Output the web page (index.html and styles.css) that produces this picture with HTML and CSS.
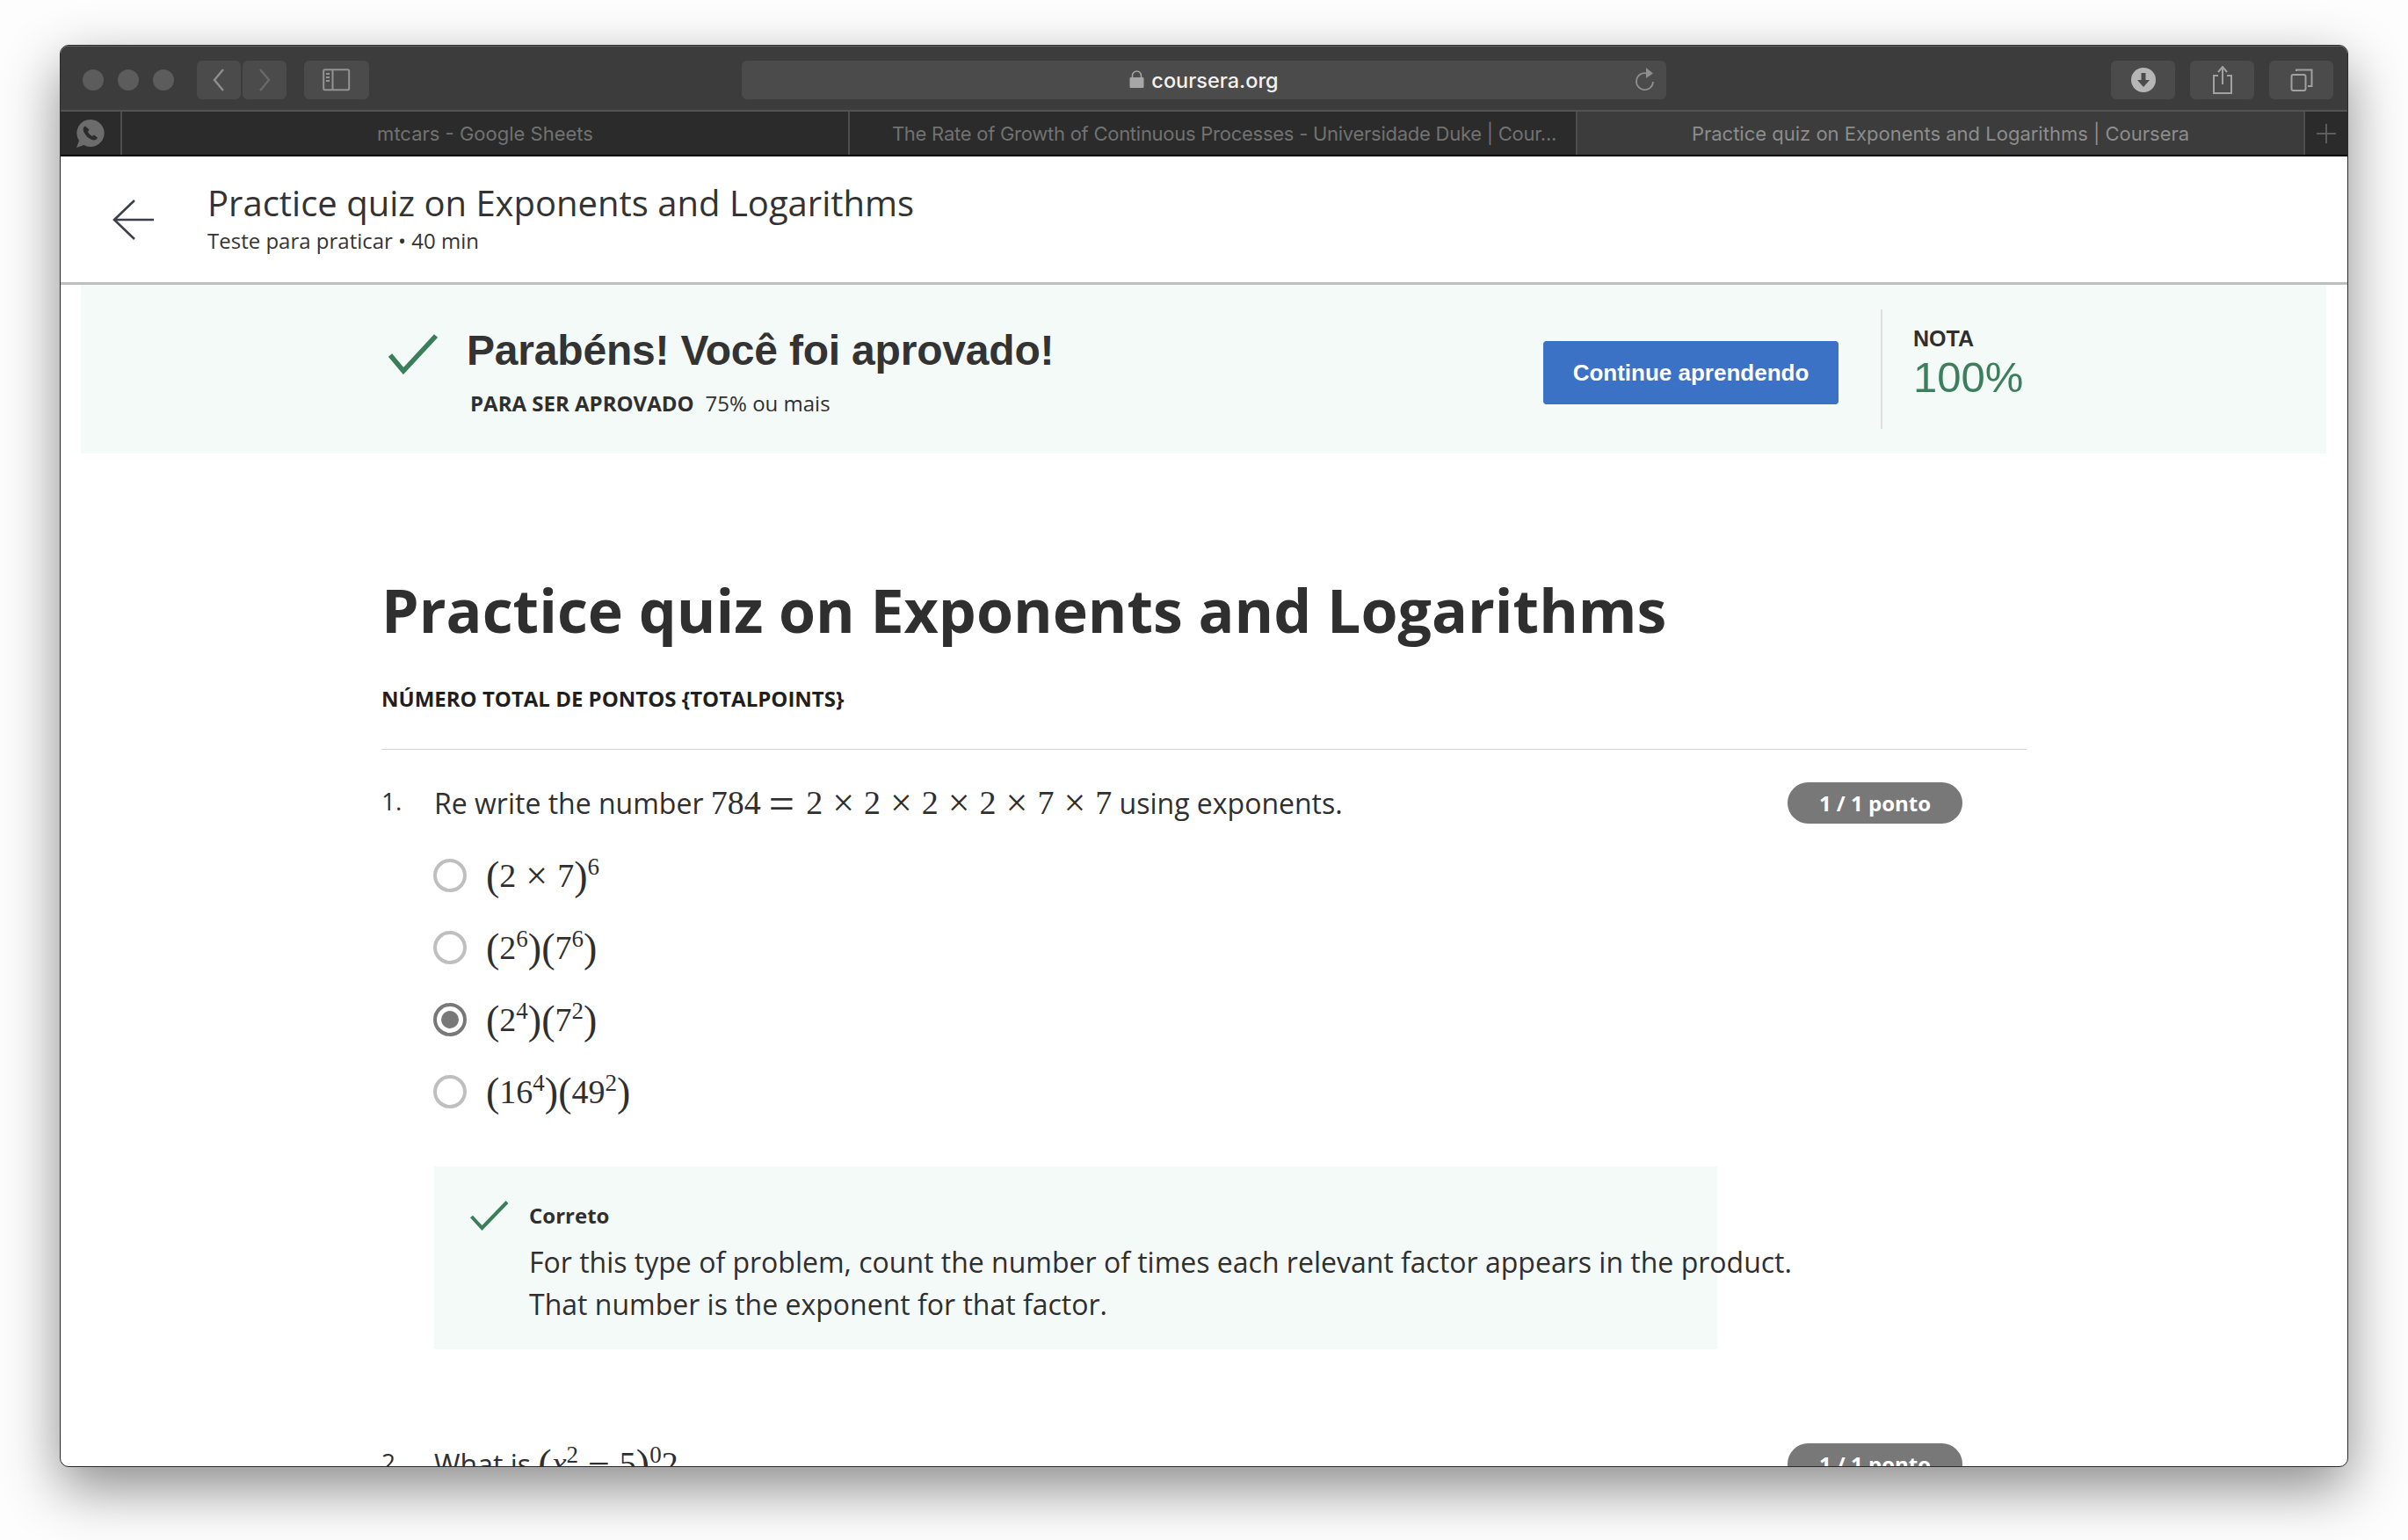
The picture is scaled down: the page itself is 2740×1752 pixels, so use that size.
FILE: index.html
```html
<!DOCTYPE html>
<html lang="en">

<head>
    <meta charset="UTF-8">
    <title>Practice quiz on Exponents and Logarithms | Coursera</title>
    <link rel="stylesheet" href="styles.css">
</head>

<body>
    <div class="window">
        <div class="toolbar">
            <div class="lights"><span></span><span></span><span></span></div>
            <div class="nav-buttons">
                <div class="tool-btn nav-btn">
                    <svg width="16" height="28" viewBox="0 0 16 28"><path d="M13 2 3 14l10 12" fill="none" stroke="#8e8f8e" stroke-width="2.4"/></svg>
                </div>
                <div class="tool-btn nav-btn">
                    <svg width="16" height="28" viewBox="0 0 16 28"><path d="M3 2l10 12L3 26" fill="none" stroke="#686968" stroke-width="2.4"/></svg>
                </div>
            </div>
            <div class="tool-btn sidebar-btn">
                <svg width="32" height="26" viewBox="0 0 32 26"><rect x="1.2" y="1.2" width="29" height="23" rx="1.5" fill="none" stroke="#929392" stroke-width="2"/><path d="M11.5 1v24" stroke="#929392" stroke-width="2"/><path d="M4 6h4M4 10h4M4 14h4" stroke="#929392" stroke-width="2"/></svg>
            </div>
            <div class="address">
                <svg class="lock" width="17" height="20" viewBox="0 0 17 20"><path d="M3.5 9V6a5 5 0 0 1 10 0v3" fill="none" stroke="#a5a6a5" stroke-width="1.6"/><rect x="0.5" y="8" width="16" height="12" rx="1" fill="#a5a6a5"/></svg>
                <span class="host">coursera.org</span>
                <svg class="reload" width="24" height="28" viewBox="0 0 24 28"><path d="M14 6.5A9.5 9.5 0 1 0 21 16" fill="none" stroke="#8d8e8d" stroke-width="1.8"/><path d="M13 0l8 6.5-8 5.5z" fill="#8d8e8d"/></svg>
            </div>
            <div class="right-buttons">
                <div class="tool-btn right-btn">
                    <svg width="28" height="28" viewBox="0 0 28 28"><circle cx="14" cy="14" r="14" fill="#b5b6b5"/><path d="M11.5 6h5v8h4.500L14 22l-7-8h4.500z" fill="#4b4c4b"/></svg>
                </div>
                <div class="tool-btn right-btn">
                    <svg width="24" height="32" viewBox="0 0 24 32"><path d="M7 11H2v20h20V11h-5" fill="none" stroke="#a0a1a0" stroke-width="2"/><path d="M12 21V2M7 7l5-6 5 6" fill="none" stroke="#a0a1a0" stroke-width="2"/></svg>
                </div>
                <div class="tool-btn right-btn">
                    <svg width="26" height="26" viewBox="0 0 26 26"><rect x="1.500" y="7" width="16" height="18" rx="2" fill="none" stroke="#a0a1a0" stroke-width="2"/><path d="M7 3V1.500h17.500V20H20" fill="none" stroke="#a0a1a0" stroke-width="2"/></svg>
                </div>
            </div>
        </div>

        <div class="tabbar">
            <div class="pinned">
                <svg width="34" height="34" viewBox="0 0 34 34"><path d="M17 1a15.500 15.500 0 0 0-13 24L1 33l8.500-3A15.500 15.500 0 1 0 17 1z" fill="#6b6c6b"/><path d="M11 8.500c-2.500 1-3 4-1.500 7 2 4 5 7 9 8.500 3 1 5.500 0 6.500-2.500l-4-3-2 1.500c-2-1-4-3-5-5l1.500-2.500z" fill="#2b2c2b"/></svg>
            </div>
            <div class="tab">mtcars - Google Sheets</div>
            <div class="tab tab-long">The Rate of Growth of Continuous Processes - Universidade Duke | Cour...</div>
            <div class="tab tab-active">Practice quiz on Exponents and Logarithms | Coursera</div>
            <div class="tab-add">
                <svg width="24" height="24" viewBox="0 0 24 24"><path d="M12 1v22M1 12h22" stroke="#5c5d5c" stroke-width="2"/></svg>
            </div>
        </div>

        <div class="page">
            <div class="page-header">
                <svg class="back" width="50" height="48" viewBox="0 0 50 48"><path d="M27 2 4 24l23 22M4 24h45" fill="none" stroke="#3a3f49" stroke-width="2.600"/></svg>
                <div class="page-heading">
                    <div class="page-title">Practice quiz on Exponents and Logarithms</div>
                    <div class="page-sub">Teste para praticar • 40 min</div>
                </div>
            </div>

            <div class="banner">
                <svg class="banner-check" width="56" height="46" viewBox="0 0 56 46"><path d="M2 24l15 18L54 2" fill="none" stroke="#3a7e5a" stroke-width="5.500"/></svg>
                <div class="banner-text">
                    <div class="banner-title">Parabéns! Você foi aprovado!</div>
                    <div class="banner-sub"><b>PARA SER APROVADO</b><span>75% ou mais</span></div>
                </div>
                <div class="continue-btn">Continue aprendendo</div>
                <div class="grade">
                    <div class="grade-label">NOTA</div>
                    <div class="grade-value">100%</div>
                </div>
            </div>

            <div class="quiz">
                <h1>Practice quiz on Exponents and Logarithms</h1>
                <div class="total">NÚMERO TOTAL DE PONTOS {TOTALPOINTS}</div>

                <div class="question">
                    <div class="q-num">1.</div>
                    <div class="q-text">Re write the number <span class="math">784<i class="rel">=</i>2<i class="op">×</i>2<i class="op">×</i>2<i class="op">×</i>2<i class="op">×</i>7<i class="op">×</i>7</span> using exponents.</div>
                    <div class="points">1 / 1 ponto</div>
                </div>

                <div class="options">
                    <div class="option"><span class="radio"></span><span class="math"><i class="paren">(</i>2<i class="op">×</i>7<i class="paren">)</i><sup>6</sup></span></div>
                    <div class="option"><span class="radio"></span><span class="math"><i class="paren">(</i>2<sup>6</sup><i class="paren">)</i><i class="paren">(</i>7<sup>6</sup><i class="paren">)</i></span></div>
                    <div class="option"><span class="radio radio-on"></span><span class="math"><i class="paren">(</i>2<sup>4</sup><i class="paren">)</i><i class="paren">(</i>7<sup>2</sup><i class="paren">)</i></span></div>
                    <div class="option"><span class="radio"></span><span class="math"><i class="paren">(</i>16<sup>4</sup><i class="paren">)</i><i class="paren">(</i>49<sup>2</sup><i class="paren">)</i></span></div>
                </div>

                <div class="feedback">
                    <svg class="feedback-check" width="44" height="34" viewBox="0 0 44 34"><path d="M1.500 18l12 13L42 1.500" fill="none" stroke="#3a7e5a" stroke-width="4"/></svg>
                    <div class="feedback-body">
                        <div class="feedback-label">Correto</div>
                        <p class="feedback-first">For this type of problem, count the number of times each relevant factor appears in the product.</p>
                        <p>That number is the exponent for that factor.</p>
                    </div>
                </div>

                <div class="question question-next">
                    <div class="q-num">2.</div>
                    <div class="q-text">What is <span class="math"><i class="paren">(</i><em>x</em><sup>2</sup><i class="op">−</i>5<i class="paren">)</i><sup>0</sup>2</span></div>
                    <div class="points">1 / 1 ponto</div>
                </div>
            </div>
        </div>
    </div>
</body>

</html>
```

FILE: styles.css
```css
html,
body {
    height: 100%;
}

body {
    box-sizing: border-box;
    margin: 0;
    padding: 51px 0 0 68px;
    background-color: #fdfdfd;
    font-family: "Open Sans", sans-serif;
    color: #2f2f2f;
}

.window {
    box-sizing: border-box;
    width: 2604px;
    height: 1618px;
    display: flex;
    flex-direction: column;
    overflow: hidden;
    border: 1px solid #2a2a2a;
    border-radius: 10px;
    background-color: #fff;
    box-shadow: 0 24px 64px rgba(0, 0, 0, 0.45);
}

/* toolbar */
.toolbar {
    box-sizing: border-box;
    height: 75px;
    flex: none;
    display: flex;
    align-items: flex-start;
    padding-top: 16px;
    background-color: #3b3c3b;
    border-top: 1px solid #636463;
    border-bottom: 2px solid #525352;
}

.lights {
    display: flex;
    gap: 16px;
    margin: 10px 0 0 25px;
}

.lights span {
    width: 24px;
    height: 24px;
    border-radius: 50%;
    background-color: #5b5c5b;
}

.tool-btn {
    height: 44px;
    display: flex;
    align-items: center;
    justify-content: center;
    background-color: #4a4b4a;
    border-radius: 6px;
}

.nav-buttons {
    display: flex;
    gap: 2px;
    margin-left: 26px;
}

.nav-btn {
    width: 50px;
}

.sidebar-btn {
    width: 74px;
    margin-left: 20px;
}

.address {
    box-sizing: border-box;
    width: 1052px;
    height: 44px;
    margin-left: 424px;
    display: flex;
    align-items: center;
    justify-content: center;
    gap: 8px;
    position: relative;
    background-color: #4a4b4a;
    border-radius: 6px;
}

.host {
    font-family: "Inter", sans-serif;
    font-size: 23.500px;
    font-weight: 500;
    color: #f2f2f2;
}

.lock {
    margin-bottom: 2px;
}

.reload {
    position: absolute;
    right: 12px;
    top: 8px;
}

.right-buttons {
    display: flex;
    gap: 17px;
    margin-left: 506px;
}

.right-btn {
    width: 73px;
}

/* tabs */
.tabbar {
    height: 49px;
    flex: none;
    display: flex;
    background-color: #2a2b2a;
    border-bottom: 2px solid #000;
    font-family: "Inter", sans-serif;
    font-size: 22px;
    color: #717271;
}

.pinned {
    width: 70px;
    display: flex;
    align-items: center;
    justify-content: center;
    border-right: 2px solid #4d4e4d;
    box-sizing: border-box;
}

.tab {
    box-sizing: border-box;
    width: 828px;
    display: flex;
    align-items: center;
    justify-content: center;
    border-right: 2px solid #4d4e4d;
    white-space: nowrap;
}

.tab-long {
    padding-left: 26px;
    letter-spacing: -0.26px;
}

.tab-active {
    background-color: #3b3c3b;
    color: #8c8d8c;
}

.tab-add {
    flex: 1;
    display: flex;
    align-items: center;
    justify-content: center;
}

/* coursera page */
.page {
    flex: 1;
    min-height: 0;
    overflow: hidden;
}

.page-header {
    box-sizing: border-box;
    height: 146px;
    display: flex;
    align-items: center;
    padding-left: 57px;
    border-bottom: 3px solid #bcbfbe;
}

.back {
    margin-right: 60px;
}

.page-heading {
    margin-bottom: 3px;
}

.page-title {
    font-size: 40px;
    line-height: 50px;
    color: #333;
}

.page-sub {
    font-size: 24px;
    line-height: 32px;
    margin-top: 2px;
    color: #333;
}

.banner {
    box-sizing: border-box;
    height: 192px;
    margin: 0 24px 0 23px;
    display: flex;
    background-color: #f4faf8;
}

.banner-check {
    margin: 56px 33px 0 350px;
}

.banner-text {
    width: 1225px;
}

.banner-title {
    margin-top: 47px;
    font-family: "Liberation Sans", sans-serif;
    font-size: 48px;
    line-height: 56px;
    font-weight: 700;
    color: #333;
    letter-spacing: -0.2px;
}

.banner-sub {
    margin: 16px 0 0 4px;
    font-size: 24px;
    line-height: 32px;
}

.banner-sub b {
    margin-right: 13px;
}

.continue-btn {
    flex: none;
    width: 336px;
    height: 72px;
    margin-top: 64px;
    display: flex;
    align-items: center;
    justify-content: center;
    background-color: #3b72c6;
    border-radius: 4px;
    color: #fff;
    font-family: "Liberation Sans", sans-serif;
    font-size: 26px;
    font-weight: 700;
}

.grade {
    box-sizing: border-box;
    flex: none;
    height: 136px;
    margin: 28px 0 0 48px;
    padding-left: 35px;
    border-left: 2px solid #dcdfde;
}

.grade-label {
    margin-top: 17px;
    font-family: "Liberation Sans", sans-serif;
    font-size: 25px;
    line-height: 32px;
    font-weight: 700;
}

.grade-value {
    font-family: "Liberation Sans", sans-serif;
    font-size: 49px;
    line-height: 56px;
    color: #3c7f5c;
}

.quiz {
    width: 1872px;
    margin-left: 365px;
}

h1 {
    margin: 133px 0 0;
    font-size: 68px;
    line-height: 90px;
    font-weight: 700;
    color: #2f2f2f;
}

.total {
    margin-top: 39px;
    font-size: 24px;
    line-height: 34px;
    font-weight: 700;
    color: #1f1f1f;
    padding-bottom: 40px;
    border-bottom: 1px solid #d4d4d4;
}

.question {
    display: flex;
    align-items: flex-start;
    margin-top: 36px;
    padding-right: 73px;
}

.q-num {
    width: 60px;
    flex: none;
    font-size: 28px;
    line-height: 44px;
}

.q-text {
    flex: 1;
    font-size: 32px;
    line-height: 48px;
    white-space: nowrap;
}

.math {
    font-family: "Liberation Serif", serif;
    font-size: 38px;
    line-height: 48px;
    white-space: nowrap;
}

.math i {
    font-style: normal;
}

.math em {
    font-style: italic;
}

.math sup {
    font-size: 27px;
    line-height: 0;
    vertical-align: 14px;
}

.math .op {
    margin: 0 11px;
    font-size: 44px;
    line-height: 0;
    vertical-align: -2px;
}

.math .rel {
    margin: 0 13px 0 9px;
    font-size: 52px;
    line-height: 0;
    vertical-align: -6px;
}

.math .paren {
    font-size: 46px;
    line-height: 0;
    vertical-align: -3px;
}

.points {
    flex: none;
    box-sizing: border-box;
    width: 199px;
    height: 47px;
    margin-top: 1px;
    display: flex;
    align-items: center;
    justify-content: center;
    background-color: #787878;
    border-radius: 24px;
    color: #fff;
    font-size: 24px;
    font-weight: 700;
}

.options {
    margin: 17px 0 0 59px;
}

.option {
    height: 82px;
    display: flex;
    align-items: center;
    gap: 22px;
}

.radio {
    box-sizing: border-box;
    width: 38px;
    height: 38px;
    display: flex;
    align-items: center;
    justify-content: center;
    border: 4px solid #bfbfbf;
    border-radius: 50%;
}

.radio-on {
    border-color: #787878;
}

.radio-on::after {
    content: "";
    width: 20px;
    height: 20px;
    border-radius: 50%;
    background-color: #787878;
}

.feedback {
    box-sizing: border-box;
    width: 1460px;
    height: 208px;
    margin: 44px 0 0 60px;
    padding: 39px 0 0 41px;
    display: flex;
    background-color: #f4faf8;
}

.feedback-check {
    flex: none;
    margin-right: 23px;
}

.feedback-body {
    white-space: nowrap;
}

.feedback-label {
    font-size: 24px;
    line-height: 34px;
    font-weight: 700;
}

.feedback p {
    margin: 0;
    font-size: 32px;
    line-height: 48px;
}

.feedback .feedback-first {
    margin-top: 12px;
}

.question-next {
    margin-top: 106px;
}
```
